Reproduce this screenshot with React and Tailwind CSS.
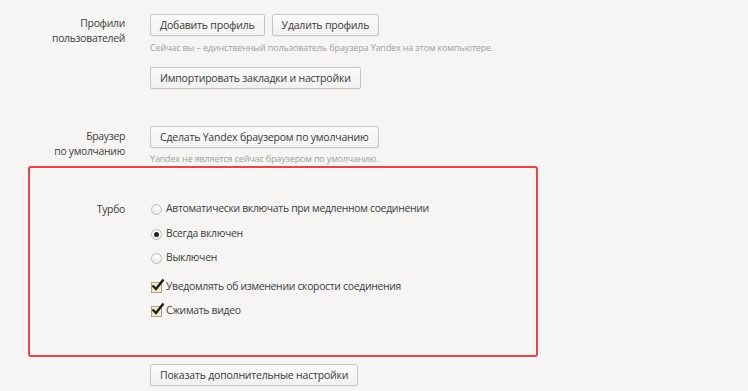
const Btn = ({ children }) => (
  <button className="h-[22px] px-[9px] rounded-[2px] border border-[#c6c6c6] bg-gradient-to-b from-[#fbfbfb] to-[#f1f1f1] text-[10.5px] tracking-[-0.2px] leading-none text-[#3a3a3a] shadow-[0_1px_0_rgba(0,0,0,0.04)]">
    {children}
  </button>
)

const Hint = ({ children }) => (
  <div className="text-[9px] tracking-[-0.15px] leading-[12px] text-[#a0a0a0]">{children}</div>
)

const Radio = ({ checked, label }) => (
  <label className="flex items-center h-[16px]">
    <span className="w-[11px] h-[11px] rounded-full border border-[#b9b9b9] bg-gradient-to-b from-[#ffffff] to-[#ececec] flex items-center justify-center mr-[4px]">
      {checked && <span className="w-[5px] h-[5px] rounded-full bg-[#222]" />}
    </span>
    <span>{label}</span>
  </label>
)

const Check = ({ label }) => (
  <label className="flex items-center h-[16px]">
    <span className="relative w-[11px] h-[11px] border border-[#a8a08a] bg-[#f4edc9] mr-[4px]">
      <svg className="absolute -left-[1px] -top-[5px]" width="14" height="14" viewBox="0 0 14 14">
        <path d="M1.5 7.5 L5 11 L12.5 1.5" fill="none" stroke="#1c1c1c" strokeWidth="2.4" strokeLinejoin="miter" />
      </svg>
    </span>
    <span>{label}</span>
  </label>
)

export default function App() {
  return (
    <div className="w-[748px] h-[391px] overflow-hidden bg-[#f6f5f3] text-[#3d3d3d] text-[10.4px] tracking-[-0.3px] font-['Open_Sans',sans-serif]">
      {/* Профили */}
      <div className="flex pt-[14px]">
        <div className="w-[125px] text-right leading-[15px] pt-[2px]">
          <div>Профили</div>
          <div>пользователей</div>
        </div>
        <div className="ml-[25px]">
          <div className="flex gap-[7px]">
            <Btn>Добавить профиль</Btn>
            <Btn>Удалить профиль</Btn>
          </div>
          <div className="mt-[6px]">
            <Hint>Сейчас вы – единственный пользователь браузера Yandex на этом компьютере.</Hint>
          </div>
          <div className="mt-[13px]">
            <Btn>Импортировать закладки и настройки</Btn>
          </div>
        </div>
      </div>

      {/* Браузер по умолчанию */}
      <div className="flex mt-[37px]">
        <div className="w-[125px] text-right leading-[15px] pt-[3px]">
          <div>Браузер</div>
          <div>по умолчанию</div>
        </div>
        <div className="ml-[25px]">
          <Btn>Сделать Yandex браузером по умолчанию</Btn>
          <div className="mt-[5px]">
            <Hint>Yandex не является сейчас браузером по умолчанию.</Hint>
          </div>
        </div>
      </div>

      {/* Турбо */}
      <div className="ml-[28px] mt-[1px] w-[510px] h-[191px] border-2 border-[#e2474a] rounded-[3px] pt-[33px]">
        <div className="flex">
          <div className="w-[95px] text-right leading-[16px]">Турбо</div>
          <div className="ml-[26px] flex flex-col">
            <Radio label="Автоматически включать при медленном соединении" />
            <div className="mt-[9px]"><Radio checked label="Всегда включен" /></div>
            <div className="mt-[8px]"><Radio label="Выключен" /></div>
            <div className="mt-[13px]"><Check label="Уведомлять об изменении скорости соединения" /></div>
            <div className="mt-[8px]"><Check label="Сжимать видео" /></div>
          </div>
        </div>
      </div>

      <div className="ml-[150px] mt-[7px]">
        <Btn>Показать дополнительные настройки</Btn>
      </div>
    </div>
  )
}
